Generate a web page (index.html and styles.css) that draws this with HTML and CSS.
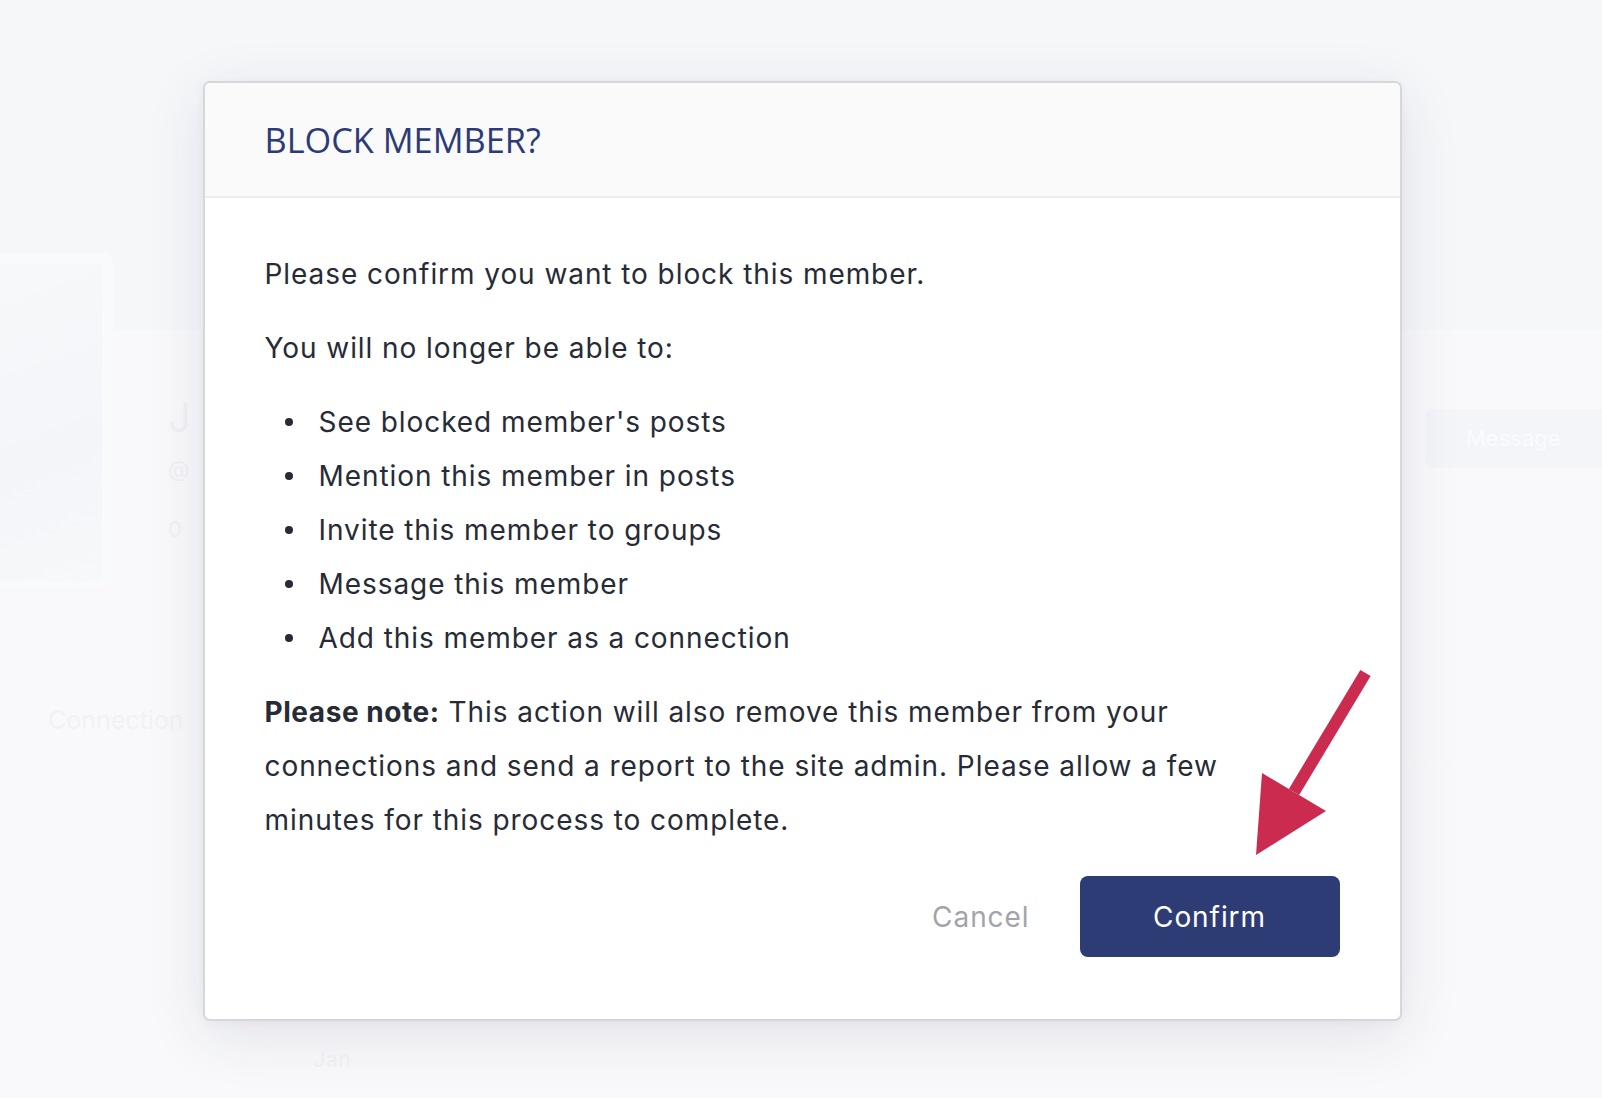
FILE: index.html
```html
<!DOCTYPE html>
<html lang="en">
<head>
<meta charset="utf-8">
<title>Block member</title>
<link rel="stylesheet" href="styles.css">
</head>
<body>
<div class="page">
  <div class="profile">
    <div class="avatar-card"><div class="avatar-img"></div></div>
    <div class="info">
      <div class="ghost-name">J</div>
      <div class="ghost-handle">@</div>
      <div class="ghost-count">0</div>
    </div>
    <div class="ghost-actions"><span class="ghost-btn">Message</span></div>
  </div>
  <div class="ghost-tabs"><span class="ghost-tab">Connection</span></div>
  <div class="ghost-foot"><span class="ghost-date">Jan</span></div>
</div>

<div class="overlay">
  <div class="modal">
    <div class="modal-header">
      <h2 class="modal-title">BLOCK MEMBER?</h2>
    </div>
    <div class="modal-body">
      <p class="line">Please confirm you want to block this member.</p>
      <p class="line">You will no longer be able to:</p>
      <ul class="bullets">
        <li>See blocked member's posts</li>
        <li>Mention this member in posts</li>
        <li>Invite this member to groups</li>
        <li>Message this member</li>
        <li>Add this member as a connection</li>
      </ul>
      <p class="note"><strong>Please note:</strong> This action will also remove this member from your connections and send a report to the site admin. Please allow a few minutes for this process to complete.</p>
      <div class="actions">
        <button class="btn-cancel">Cancel</button>
        <button class="btn-confirm">Confirm</button>
      </div>
    </div>
  </div>
</div>

<svg class="arrow" width="130" height="200" viewBox="0 0 130 200">
  <line x1="115.5" y1="13" x2="44" y2="132" stroke="#cb2b4f" stroke-width="12"/>
  <polygon points="12,113 76,151 6,195" fill="#cb2b4f"/>
</svg>
</body>
</html>
```

FILE: styles.css
```css
html, body {
  margin: 0;
  padding: 0;
}
body {
  width: 1602px;
  height: 1098px;
  overflow: hidden;
  background: #f9f9fb;
  font-family: "Inter", "Liberation Sans", sans-serif;
  position: relative;
}

/* faded page behind the dialog */
.page {
  height: 1098px;
  background: linear-gradient(to bottom, #f6f7f9 0, #f6f7f9 330px, #f9f9fb 330px);
  color: #f0f1f4;
}
.profile {
  display: flex;
  padding-top: 253px;
  height: 345px;
}
.avatar-card {
  width: 113px;
  height: 334px;
  background: #f9fafb;
  border-radius: 0 10px 10px 0;
  padding-top: 10px;
  box-sizing: border-box;
}
.avatar-img {
  width: 102px;
  height: 318px;
  background: linear-gradient(160deg, #f7f8fa, #f4f5f8 60%, #f7f8fa);
}
.info {
  margin-left: 55px;
  padding-top: 145px;
  font-size: 40px;
  line-height: 1;
}
.ghost-name { height: 60px; }
.ghost-handle { font-size: 22px; height: 60px; }
.ghost-count { font-size: 22px; }
.ghost-actions {
  margin-left: auto;
  padding-top: 156px;
}
.ghost-btn {
  display: block;
  width: 177px;
  height: 59px;
  box-sizing: border-box;
  padding-left: 41px;
  background: #f4f5f9;
  border-radius: 8px 0 0 8px;
  color: #fbfbfd;
  font-size: 22px;
  line-height: 59px;
}
.ghost-tabs {
  padding: 107px 0 0 48px;
  height: 60px;
  border-bottom: 1px solid #f7f8fa;
}
.ghost-tab {
  font-size: 25px;
  color: #f1f2f5;
}
.ghost-foot {
  padding: 280px 0 0 313px;
}
.ghost-date {
  font-size: 22px;
  color: #f1f2f5;
}

/* dialog */
.overlay {
  position: absolute;
  inset: 0;
  display: flex;
  justify-content: center;
  align-items: flex-start;
  padding: 81px 0 0 2px;
  box-sizing: border-box;
}
.modal {
  width: 1199px;
  box-sizing: border-box;
  background: #ffffff;
  border: 2px solid #d6d7db;
  border-radius: 7px;
  box-shadow: 0 14px 60px rgba(35, 45, 80, 0.11), 0 2px 10px rgba(35, 45, 80, 0.04);
  overflow: hidden;
}
.modal-header {
  height: 113px;
  background: #fafafa;
  border-bottom: 2px solid #ececef;
  display: flex;
  align-items: center;
  padding: 0 60px;
}
.modal-title {
  margin: 0;
  font-family: "Open Sans", "Noto Sans", sans-serif;
  font-weight: 400;
  font-size: 34.3px;
  color: #2d3a78;
}
.modal-body {
  padding: 49px 60px 62px;
  color: #272b36;
  font-size: 28px;
  line-height: 54px;
  letter-spacing: 0.93px;
}
.line {
  margin: 0 0 20px;
}
.bullets {
  list-style: none;
  margin: 0 0 20px;
  padding: 0;
}
.bullets li {
  display: flex;
  align-items: center;
}
.bullets li::before {
  content: "";
  width: 8px;
  height: 8px;
  border-radius: 50%;
  background: #272b36;
  margin: 0 26px 0 20px;
  flex: none;
}
.note {
  margin: 0;
  max-width: 1000px;
}
.note strong {
  font-weight: 700;
  letter-spacing: 0.56px;
}
.actions {
  display: flex;
  justify-content: flex-end;
  align-items: center;
  margin-top: 29px;
}
.btn-cancel {
  background: none;
  border: 0;
  padding: 0;
  margin-right: 50px;
  font-family: "Inter", "Liberation Sans", sans-serif;
  font-size: 28px;
  letter-spacing: 0.93px;
  color: #a3a4ab;
}
.btn-confirm {
  width: 260px;
  height: 81px;
  border: 0;
  border-radius: 8px;
  background: #2e3c76;
  color: #ffffff;
  font-family: "Inter", "Liberation Sans", sans-serif;
  font-size: 28px;
  letter-spacing: 0.93px;
}

.arrow {
  position: absolute;
  left: 1250px;
  top: 660px;
}
```
